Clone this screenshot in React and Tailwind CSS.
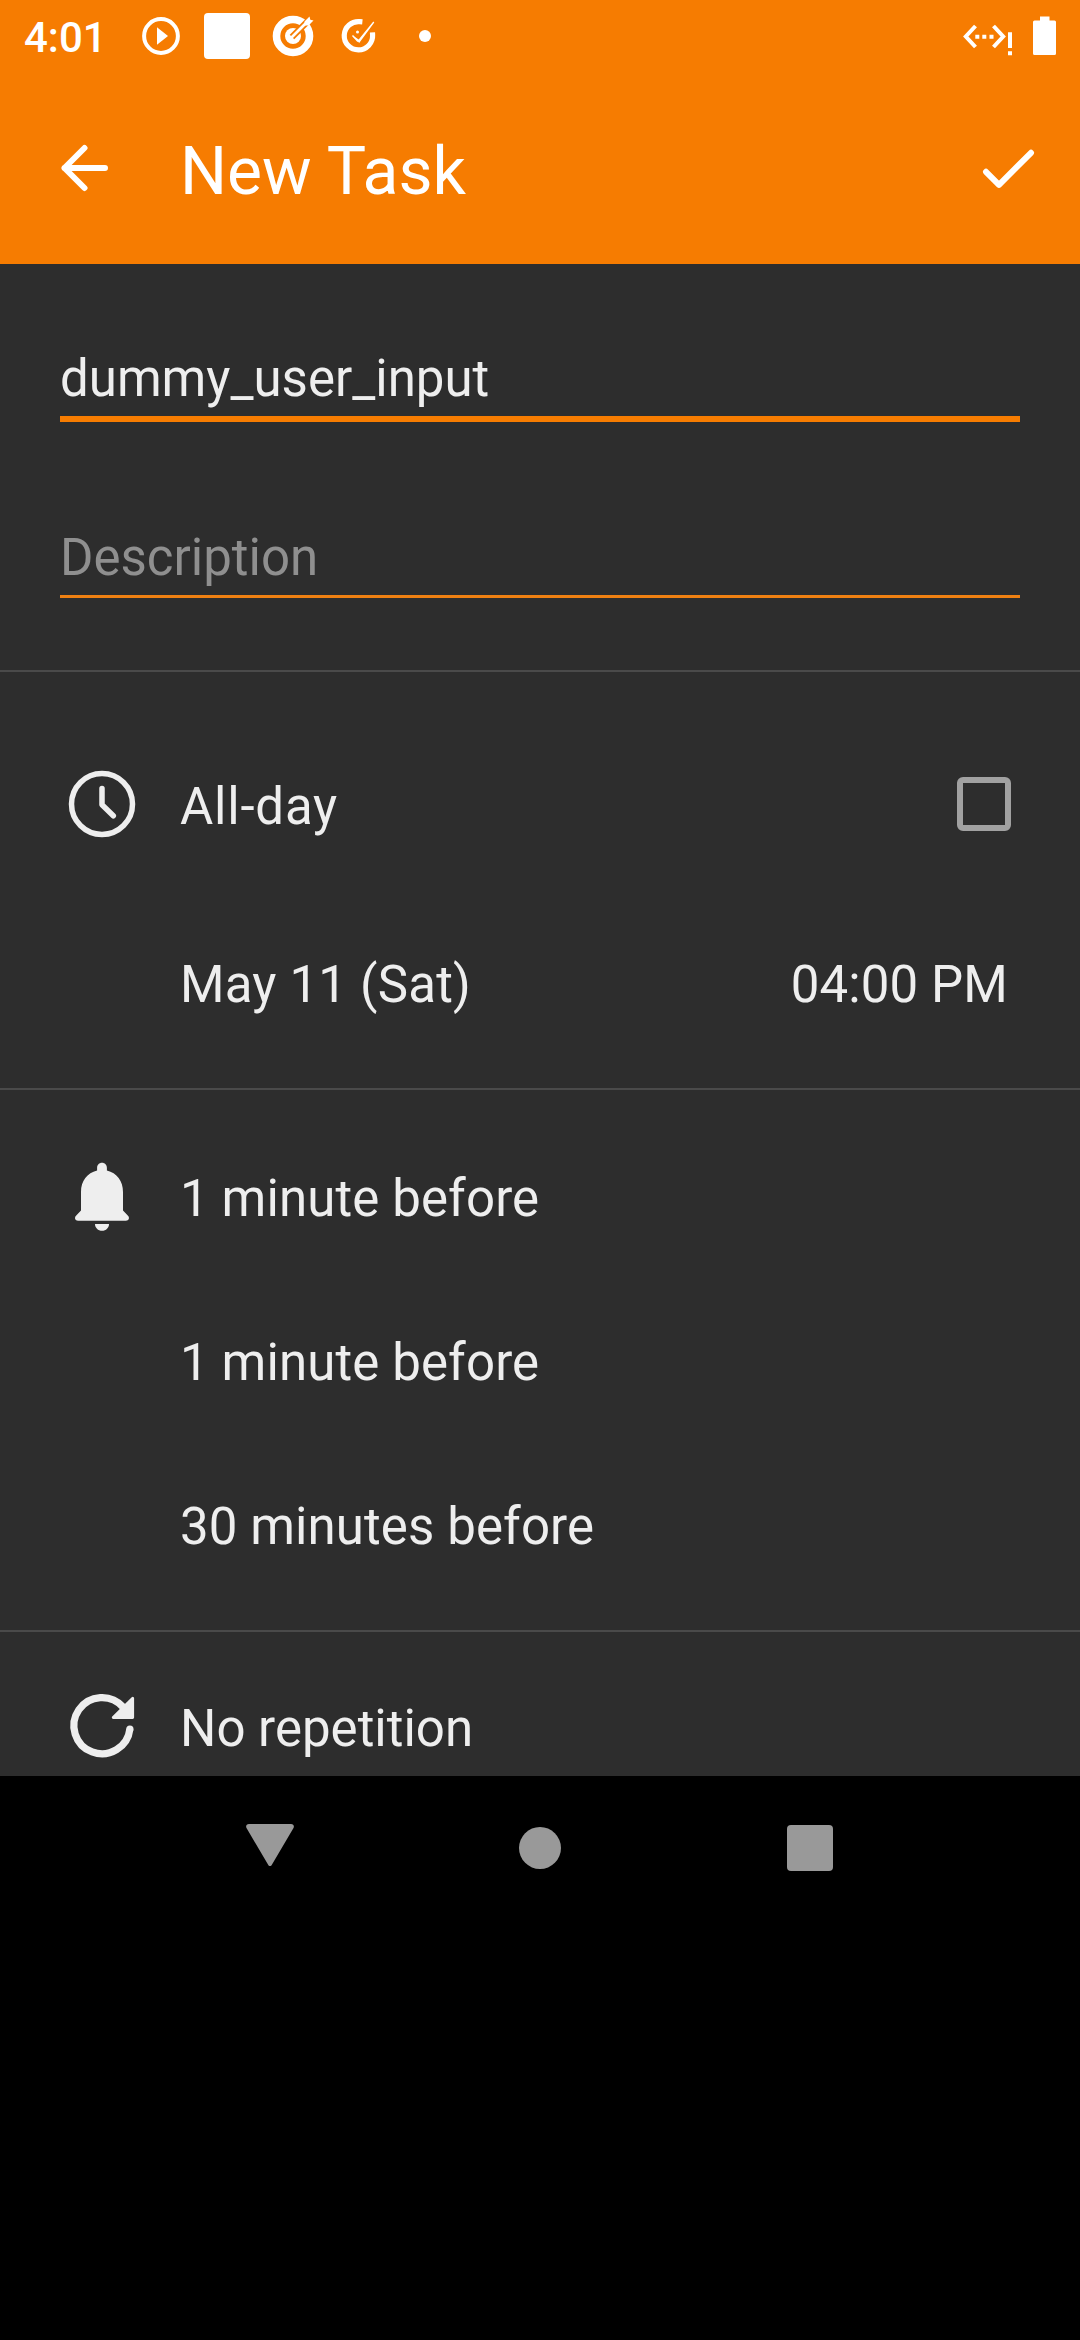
const text = "text-[51px] leading-[60px] whitespace-nowrap text-[#eeeeee]";

function StatusIcons() {
  return (
    <div className="ml-[41px] flex items-center">
      <svg width="38" height="38" viewBox="0 0 38 38">
        <circle cx="19" cy="19" r="16.9" fill="none" stroke="#fff" strokeWidth="4" />
        <path d="M15 10.2v17.6L26 19z" fill="#fff" />
      </svg>
      <div className="ml-6 size-[46px] rounded-[4px] bg-white" />
      <svg className="ml-[22px]" width="42" height="42" viewBox="0 0 42 42">
        <circle cx="21" cy="21" r="16.500" fill="none" stroke="#fff" strokeWidth="7.600" />
        <circle cx="21" cy="21" r="8" fill="#fff" />
        <path d="M20 22L38 4" stroke="#f67c01" strokeWidth="6.400" />
        <path d="M19.500 22.500L34 8" stroke="#fff" strokeWidth="2.800" strokeLinecap="round" />
        <path d="M32.500 10V6.500l5-5 .8 3.200 3.200.8-5 5H33z" fill="#fff" />
      </svg>
      <svg className="ml-[26px]" width="38" height="38" viewBox="0 0 38 38">
        <path d="M19.800 4.600A14.200 14.200 0 1 0 32.600 18" fill="none" stroke="#fff" strokeWidth="5.200" strokeLinecap="square" />
        <path d="M12.500 18.500L18.700 22.500L33.300 4.500L34.300 5.500L19.200 26z" fill="#fff" />
        <path d="M12.500 18.500l5.500 6" stroke="#fff" strokeWidth="1.500" />
        <circle cx="17.500" cy="15" r="1.500" fill="#fff" />
      </svg>
      <div className="ml-[41px] size-3 rounded-full bg-white" />
    </div>
  );
}

function StatusBar() {
  return (
    <div className="flex h-[72px] items-center pl-6 pr-6">
      <span className="w-[77px] pt-[3px] text-[42px] leading-[50px] font-medium text-white">4:01</span>
      <StatusIcons />
      <svg className="ml-auto" width="50" height="42" viewBox="963 15 50 42">
        <g fill="none" stroke="#fff" strokeWidth="4">
          <path d="M975.500 26L965.800 36.500L975.500 47" />
          <path d="M993.500 26L1003.200 36.500L993.500 47" />
        </g>
        <path d="M975.300 34.700h4v4h-4zM982.300 34.700h4v4h-4zM989.500 34.700h4v4h-4zM1008 32.300h4v15.700h-4zM1008 51.300h4v4h-4z" fill="#fff" />
      </svg>
      <svg className="ml-5" width="23" height="40" viewBox="0 0 23 40">
        <path d="M7 0.500h9.500v4H21.500a1.500 1.500 0 0 1 1.500 1.500v31.500a1.500 1.500 0 0 1-1.500 1.500H1.500a1.500 1.500 0 0 1-1.500-1.500V6a1.500 1.500 0 0 1 1.500-1.500H7z" fill="#fff" />
      </svg>
    </div>
  );
}

function AppBar() {
  return (
    <div className="flex h-[192px] items-center pr-[45px] pl-[60px]">
      <svg width="48" height="48" viewBox="60 144 48 48" fill="none" stroke="#fff" strokeWidth="6" strokeLinecap="round" strokeLinejoin="round">
        <path d="M84.500 148L64.500 168L84.500 188M64.500 168H105" />
      </svg>
      <h1 className="ml-[72px] pt-[7px] text-[66px] leading-[78px] text-white">New Task</h1>
      <svg className="ml-auto" width="54" height="40" viewBox="981 148 54 40" fill="none" stroke="#fff" strokeWidth="6" strokeLinecap="round" strokeLinejoin="round">
        <path d="M986 171.800L999 184.800L1031 152.800" />
      </svg>
    </div>
  );
}

function ClockIcon() {
  return (
    <svg width="84" height="84" viewBox="-42 -42 84 84" fill="none" stroke="#eeeeee" strokeWidth="5.500" strokeLinecap="round" strokeLinejoin="round">
      <circle r="30.500" />
      <path d="M0-15.500V0.800L11.300 11.800" />
    </svg>
  );
}

function BellIcon() {
  return (
    <svg width="84" height="84" viewBox="60 1155 84 84" fill="#eeeeee">
      <path d="M102 1162.700c-2.900 0-4.900 2.200-4.900 5v2.800C87.200 1172.800 81 1181 81 1192v18.500l-5 5.300c-2 2.300-.7 4.900 2 4.900h48c2.700 0 4-2.600 2-4.900l-5-5.300V1192c0-11-6.200-19.200-16.100-21.500v-2.800c0-2.800-2-5-4.900-5z" />
      <path d="M95 1224h14c0 3.900-3 6.800-7 6.800s-7-2.900-7-6.800z" />
    </svg>
  );
}

function RepeatIcon() {
  return (
    <svg width="84" height="84" viewBox="60 1684 84 84">
      <path d="M129.900 1729A28.100 28.100 0 1 1 123 1707" fill="none" stroke="#eeeeee" strokeWidth="7.200" strokeLinecap="butt" />
      <circle cx="129.900" cy="1729" r="3.600" fill="#eeeeee" />
      <path d="M132.700 1698.200V1717.500H113.200z" fill="#eeeeee" stroke="#eeeeee" strokeWidth="2.800" strokeLinejoin="round" />
    </svg>
  );
}

function Row({ icon, label, className, labelClass, children }) {
  return (
    <div className={`flex items-center pl-[60px] ${className}`}>
      <div className="mr-9 w-[84px]">{icon}</div>
      <span className={`${text} ${labelClass}`}>{label}</span>
      {children}
    </div>
  );
}

export default function App() {
  return (
    <div className="h-[2340px] w-[1080px] overflow-hidden bg-black font-['Roboto',sans-serif]">
      <header className="h-[264px] bg-[#f67c01]">
        <StatusBar />
        <AppBar />
      </header>
      <main className="flex h-[1512px] flex-col overflow-hidden bg-[#2d2d2d]">
        <section className="h-[408px] shrink-0 border-b-2 border-[#4a4a4a] px-[60px] pt-[85px]">
          <div className={`h-[73px] border-b-6 border-[#f67c01] ${text}`}>dummy_user_input</div>
          <div className="mt-[106px] h-[70px] border-b-3 border-[#ee8012] text-[51px] leading-[60px] text-[#8f8f8f]">Description</div>
        </section>
        <section className="h-[418px] shrink-0 border-b-2 border-[#4a4a4a] pt-[42px]">
          <Row className="h-[180px]" icon={<ClockIcon />} label="All-day" labelClass="pt-[5px] tracking-[0.8px]">
            <div className="mr-[69px] ml-auto size-[54px] rounded-[6px] border-6 border-[#a1a1a1]" />
          </Row>
          <Row className="h-[180px]" label="May 11 (Sat)" labelClass="pt-[1px] tracking-[0.2px]">
            <span className={`mr-[72px] ml-auto pt-[1px] tracking-[0.1px] ${text}`}>04:00 PM</span>
          </Row>
        </section>
        <section className="h-[542px] shrink-0 border-b-2 border-[#4a4a4a] pt-[25px]">
          <Row className="h-[164px]" icon={<BellIcon />} label="1 minute before" labelClass="pt-[4px] tracking-[0.12px]" />
          <Row className="h-[164px]" label="1 minute before" labelClass="pt-[4px] tracking-[0.12px]" />
          <Row className="h-[164px]" label="30 minutes before" labelClass="pt-[4px] tracking-[0.1px]" />
        </section>
        <section className="shrink-0 pt-3">
          <Row className="h-[164px]" icon={<RepeatIcon />} label="No repetition" labelClass="pt-[5px]" />
        </section>
      </main>
      <nav className="flex h-[144px] items-center justify-center text-[#999999]">
        <div className="flex w-[270px] justify-center">
          <svg className="-mt-[6px]" width="48" height="42" viewBox="0 0 48 42" fill="currentColor">
            <path d="M3 0h42c2.500 0 3.500 2 2.500 4L26 40.500c-1 2-3 2-4 0L.5 4C-.5 2 .5 0 3 0z" />
          </svg>
        </div>
        <div className="flex w-[270px] justify-center">
          <div className="size-[42px] rounded-full bg-[#999999]" />
        </div>
        <div className="flex w-[270px] justify-center">
          <div className="size-[46px] rounded-[4px] bg-[#999999]" />
        </div>
      </nav>
    </div>
  );
}
